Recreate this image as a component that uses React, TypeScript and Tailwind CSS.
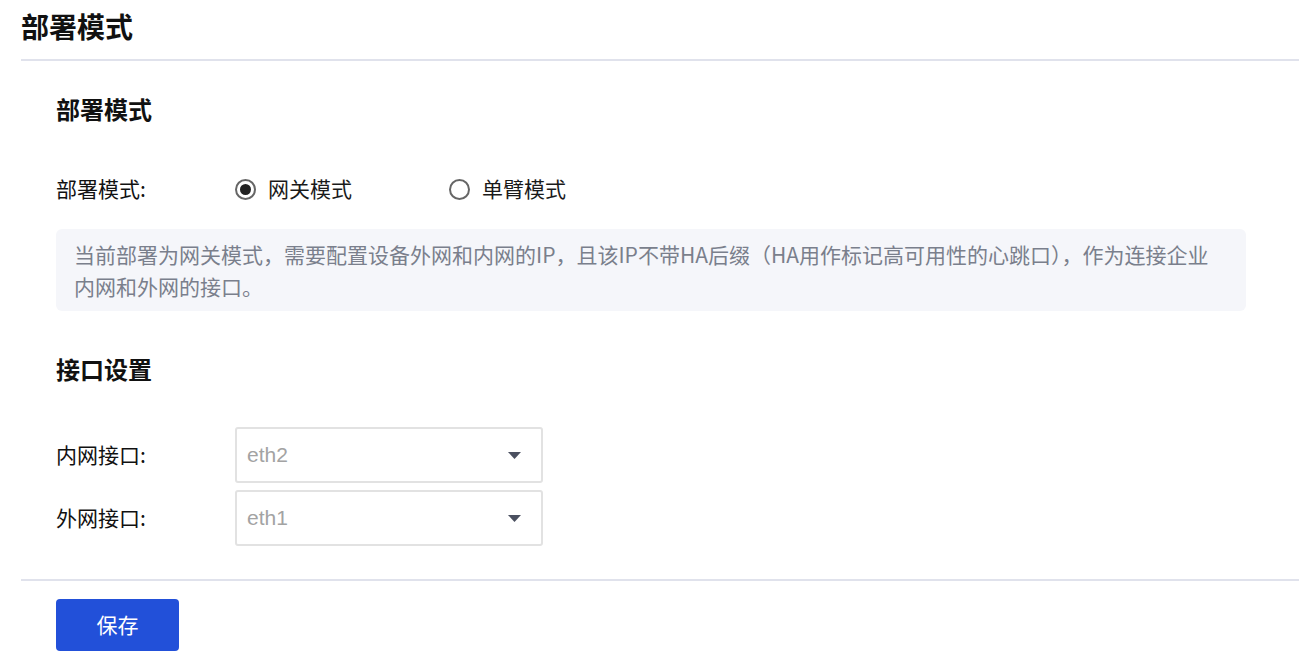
import { useState } from "react"

const font = { fontFamily: '"Microsoft YaHei", "Noto Sans CJK SC", "Liberation Sans", sans-serif' }

function Radio({ checked, label, onClick }: { checked: boolean; label: string; onClick: () => void }) {
  return (
    <label onClick={onClick} className="flex items-center gap-3 cursor-pointer">
      <span className="flex h-[21px] w-[21px] items-center justify-center rounded-full border-2 border-[#666]">
        {checked && <span className="h-[11px] w-[11px] rounded-full bg-[#222]" />}
      </span>
      <span className="text-[21px] text-[#1a1a1a]">{label}</span>
    </label>
  )
}

function Select({ value }: { value: string }) {
  return (
    <div className="flex h-[56px] w-[308px] items-center justify-between rounded-[3px] border-2 border-[#e2e2e2] bg-white pl-[10px] pr-[20px]">
      <span className="text-[21px] text-[#a3a3a3]" style={{ fontFamily: '"Liberation Sans", Arial, sans-serif' }}>
        {value}
      </span>
      <svg width="13" height="7" viewBox="0 0 13 7">
        <path d="M0 0 H13 L6.5 7 Z" fill="#4b5060" />
      </svg>
    </div>
  )
}

export default function App() {
  const [mode, setMode] = useState("gateway")

  return (
    <div className="min-h-screen bg-white pl-[21px] text-[#111]" style={font}>
      <h1 className="pt-[8px] pb-[15px] text-[28px] font-bold leading-[36px]">部署模式</h1>
      <div className="h-[2px] bg-[#e0e2ec]" />

      <div className="pl-[35px] pr-[53px]">
        <h2 className="pt-[33px] text-[24px] font-bold leading-[30px]">部署模式</h2>

        <div className="mt-[50px] flex h-[30px] items-center text-[21px]">
          <span className="w-[179px]">部署模式:</span>
          <div className="w-[214px]">
            <Radio checked={mode === "gateway"} label="网关模式" onClick={() => setMode("gateway")} />
          </div>
          <Radio checked={mode === "arm"} label="单臂模式" onClick={() => setMode("arm")} />
        </div>

        <div className="mt-[25px] rounded-[6px] bg-[#f5f6fa] px-[18px] py-[9px] text-[21px] leading-[32px] text-[#7a7f8c]">
          当前部署为网关模式，需要配置设备外网和内网的IP，且该IP不带HA后缀（HA用作标记高可用性的心跳口），作为连接企业内网和外网的接口。
        </div>

        <h2 className="pt-[43px] text-[24px] font-bold leading-[30px]">接口设置</h2>

        <div className="mt-[43px] flex flex-col gap-[7px]">
          <div className="flex items-center text-[21px]">
            <span className="w-[179px]">内网接口:</span>
            <Select value="eth2" />
          </div>
          <div className="flex items-center text-[21px]">
            <span className="w-[179px]">外网接口:</span>
            <Select value="eth1" />
          </div>
        </div>
      </div>

      <div className="mt-[33px] h-[2px] bg-[#e0e2ec]" />

      <div className="pl-[35px] pt-[18px]">
        <button className="h-[52px] w-[123px] rounded-[4px] bg-[#2250d9] text-[21px] text-white">保存</button>
      </div>
    </div>
  )
}
